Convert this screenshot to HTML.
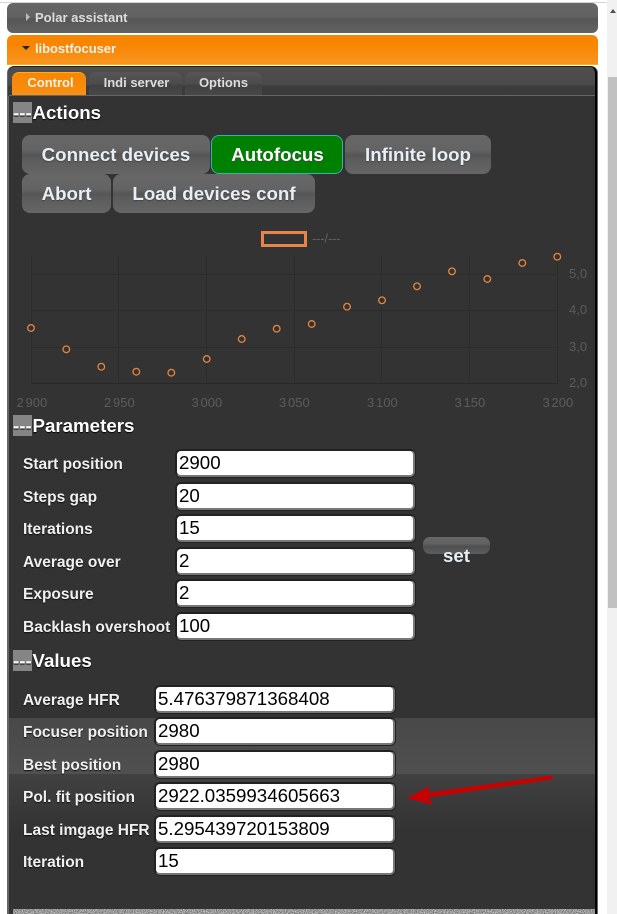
<!DOCTYPE html>
<html><head><meta charset="utf-8">
<style>
html,body{margin:0;padding:0;width:617px;height:914px;overflow:hidden;background:#fff;font-family:"Liberation Sans",sans-serif}
div,span{position:absolute;box-sizing:border-box;white-space:nowrap}
.btn{height:39px;border-radius:8px;background:linear-gradient(#676767 0,#646464 38%,#555 52%,#5c5c5c 62%,#666 100%);color:#e8eef4;font:bold 18.72px/39px "Liberation Sans",sans-serif;text-align:center;text-shadow:0 1px 1px #444}
.h{left:13px;color:#fff;font:bold 18.72px/21px "Liberation Sans",sans-serif;padding-left:19.5px;height:21px;text-shadow:0 1px 1px #000}
.h i{position:absolute;left:0;top:0;width:19px;height:21px;background:#858585;font-style:normal}
.l{left:23px;color:#f0f0f0;font:bold 15.5px/20px "Liberation Sans",sans-serif;text-shadow:0 1px 1px #111}
.i{height:27px;background:#fff;border-radius:5px;border:1px solid #222;border-bottom:2px solid #777;border-right:2px solid #777;color:#000;font:18.72px/24px "Liberation Sans",sans-serif;padding-left:2px;box-shadow:0 0 0 1px #222}
.p{left:176px;width:239px}
.v{left:155px;width:240px}
.t{top:72px;height:23px;border-radius:7px 7px 0 0;font:bold 13px/21px "Liberation Sans",sans-serif;text-align:center;color:#ddd;background:linear-gradient(#555,#4c4c4c 50%,#414141 60%,#484848)}
</style></head><body>
<div style="left:0;top:2px;width:607px;height:1px;background:#d4d4d4"></div>

<div style="left:7px;top:3px;width:591px;height:30px;border-radius:6px;background:linear-gradient(#666 0,#626262 48%,#565656 52%,#626262 100%)"></div>
<div style="left:26px;top:13px;width:0;height:0;border-left:4px solid #bbb;border-top:4px solid transparent;border-bottom:4px solid transparent"></div>
<div style="left:35px;top:10px;color:#ddd;font:bold 13px/16px 'Liberation Sans',sans-serif">Polar assistant</div>

<div style="left:7px;top:35px;width:591px;height:30px;border-radius:6px 6px 0 0;background:linear-gradient(#f88500 0,#f88500 30%,#f89520 100%);border-bottom:1px solid #fdb300"></div>
<div style="left:22px;top:46px;width:0;height:0;border-top:4px solid #222;border-left:4px solid transparent;border-right:4px solid transparent"></div>
<div style="left:35px;top:41px;font:bold 13px/16px 'Liberation Sans',sans-serif;color:#f4f0e8;letter-spacing:-0.05px">libostfocuser</div>

<!-- container -->
<div style="left:7px;top:66px;width:591px;height:848px;background:#666;border-radius:7px 7px 0 0"></div>
<div style="left:8px;top:66px;width:589px;height:30px;border-radius:7px 7px 0 0;border-top:1px solid #222;background:linear-gradient(#4e4e4e 0,#4a4a4a 60%,#3c3c3c 68%,#3a3a3a 100%);border-right:2px solid #000"></div>
<div style="left:9px;top:95px;width:586px;height:819px;background:#333;border-top:1px solid #666"></div>
<div style="left:595px;top:95px;width:2px;height:819px;background:#000"></div>

<div class="t" style="left:12px;width:74px;background:linear-gradient(#f88500,#f89015);border-top:1px solid #fdb300;color:#f4f0e8;line-height:20px;padding-left:3px">Control</div>
<div class="t" style="left:89px;width:93px;padding-left:2px">Indi server</div>
<div class="t" style="left:185px;width:77px">Options</div>

<div class="h" style="top:102px"><i></i><span style="left:0;top:0;color:#fff">---</span>Actions</div>

<div class="btn" style="left:22px;top:135px;width:188px">Connect devices</div>
<div class="btn" style="left:211px;top:135px;width:132px;background:#008000;border:1px solid #36b0b0;color:#fff;line-height:37px;padding-left:1px">Autofocus</div>
<div class="btn" style="left:345px;top:135px;width:146px">Infinite loop</div>
<div class="btn" style="left:22px;top:174px;width:89px">Abort</div>
<div class="btn" style="left:113px;top:174px;width:202px">Load devices conf</div>

<svg style="position:absolute;left:0;top:225px" width="617" height="190" viewBox="0 225 617 190">
<g stroke="#2c2c2c" stroke-width="1" fill="none">
<path d="M31.5 256V383M118.5 256V383M206.5 256V383M294.5 256V383M381.5 256V383M469.5 256V383M557.5 256V383"/>
<path d="M31 274.5H558M31 310.5H558M31 347.5H558"/>
<path d="M31 383.5H558" stroke="#292929"/>
</g>
<rect x="262.5" y="232.5" width="43" height="13" fill="none" stroke="#e8834a" stroke-width="3"/>
<text x="312" y="243" font-family="Liberation Sans" font-size="12.5" fill="#626262">---/---</text>
<g fill="none" stroke="#e8843f" stroke-width="1.3">
<circle cx="31" cy="328" r="3.3"/><circle cx="66.3" cy="349.3" r="3.3"/><circle cx="101.3" cy="366.7" r="3.3"/><circle cx="136.3" cy="371.7" r="3.3"/><circle cx="171.3" cy="372.7" r="3.3"/><circle cx="206.7" cy="359" r="3.3"/><circle cx="241.7" cy="339" r="3.3"/><circle cx="276.7" cy="328.7" r="3.3"/><circle cx="311.7" cy="324" r="3.3"/><circle cx="347" cy="306.7" r="3.3"/><circle cx="382" cy="300.3" r="3.3"/><circle cx="417" cy="286.3" r="3.3"/><circle cx="452" cy="271.3" r="3.3"/><circle cx="487.3" cy="279" r="3.3"/><circle cx="522.3" cy="263" r="3.3"/><circle cx="557.3" cy="256.7" r="3.3"/>
</g>
<g font-family="Liberation Sans" font-size="13" fill="#5c5c5c" word-spacing="-1.8">
<text x="16.5" y="407">2 900</text><text x="104" y="407">2 950</text><text x="191.5" y="407">3 000</text><text x="279" y="407">3 050</text><text x="367" y="407">3 100</text><text x="454.5" y="407">3 150</text><text x="542.5" y="407">3 200</text>
<text x="569" y="278">5,0</text><text x="569" y="314">4,0</text><text x="569" y="351">3,0</text><text x="569" y="387">2,0</text>
</g>
</svg>

<div class="h" style="top:415px"><i></i><span style="left:0;top:0;color:#fff">---</span>Parameters</div>

<div class="l" style="top:455px">Start position</div>
<div class="l" style="top:488px">Steps gap</div>
<div class="l" style="top:520px">Iterations</div>
<div class="l" style="top:553px">Average over</div>
<div class="l" style="top:585px">Exposure</div>
<div class="l" style="top:618px">Backlash overshoot</div>
<div class="i p" style="top:450px">2900</div>
<div class="i p" style="top:483px">20</div>
<div class="i p" style="top:515px">15</div>
<div class="i p" style="top:548px">2</div>
<div class="i p" style="top:580px">2</div>
<div class="i p" style="top:613px">100</div>

<div style="left:423px;top:537px;width:67px;height:17px;border-radius:7px;background:linear-gradient(#676767,#626262 38%,#4f4f4f 55%,#5e5e5e)"></div>
<div style="left:423px;top:544px;width:67px;text-align:center;color:#e8eef4;font:bold 18.72px/23px 'Liberation Sans',sans-serif;text-shadow:0 1px 1px #333">set</div>

<div class="h" style="top:650px"><i></i><span style="left:0;top:0;color:#fff">---</span>Values</div>

<div style="left:9px;top:718px;width:586px;height:56px;background:linear-gradient(#484848,#505050)"></div>
<div style="left:9px;top:774px;width:586px;height:56px;background:linear-gradient(#414141,#333)"></div>

<div class="l" style="top:691px">Average HFR</div>
<div class="l" style="top:723px">Focuser position</div>
<div class="l" style="top:756px">Best position</div>
<div class="l" style="top:788px">Pol. fit position</div>
<div class="l" style="top:821px">Last imgage HFR</div>
<div class="l" style="top:853px">Iteration</div>
<div class="i v" style="top:686px">5.476379871368408</div>
<div class="i v" style="top:718px">2980</div>
<div class="i v" style="top:751px">2980</div>
<div class="i v" style="top:783px">2922.0359934605663</div>
<div class="i v" style="top:816px">5.295439720153809</div>
<div class="i v" style="top:848px">15</div>

<svg style="position:absolute;left:0;top:0" width="617" height="914">
<path d="M552 775.5 L428 792.5 L430 786 L407 798 L433 805 L428.5 797.5 L552.5 779.5 Z" fill="#c80000"/>
<defs><filter id="n" x="0" y="0" width="100%" height="100%" color-interpolation-filters="sRGB"><feTurbulence type="fractalNoise" baseFrequency="0.9" numOctaves="2"/><feColorMatrix values="0.9 0 0 0 0.15 0.9 0 0 0 0.15 0.9 0 0 0 0.15 0 0 0 0 1"/></filter></defs>
<rect x="13" y="909" width="582" height="5" fill="#999" filter="url(#n)"/>
</svg>

<!-- scrollbar -->
<div style="left:607px;top:0;width:10px;height:914px;background:#f1f1f1"></div>
<div style="left:608px;top:77px;width:9px;height:531px;background:#c1c1c1"></div>
<div style="left:610px;top:9px;width:0;height:0;border-bottom:4px solid #505050;border-left:3.5px solid transparent;border-right:3.5px solid transparent"></div>
</body></html>
